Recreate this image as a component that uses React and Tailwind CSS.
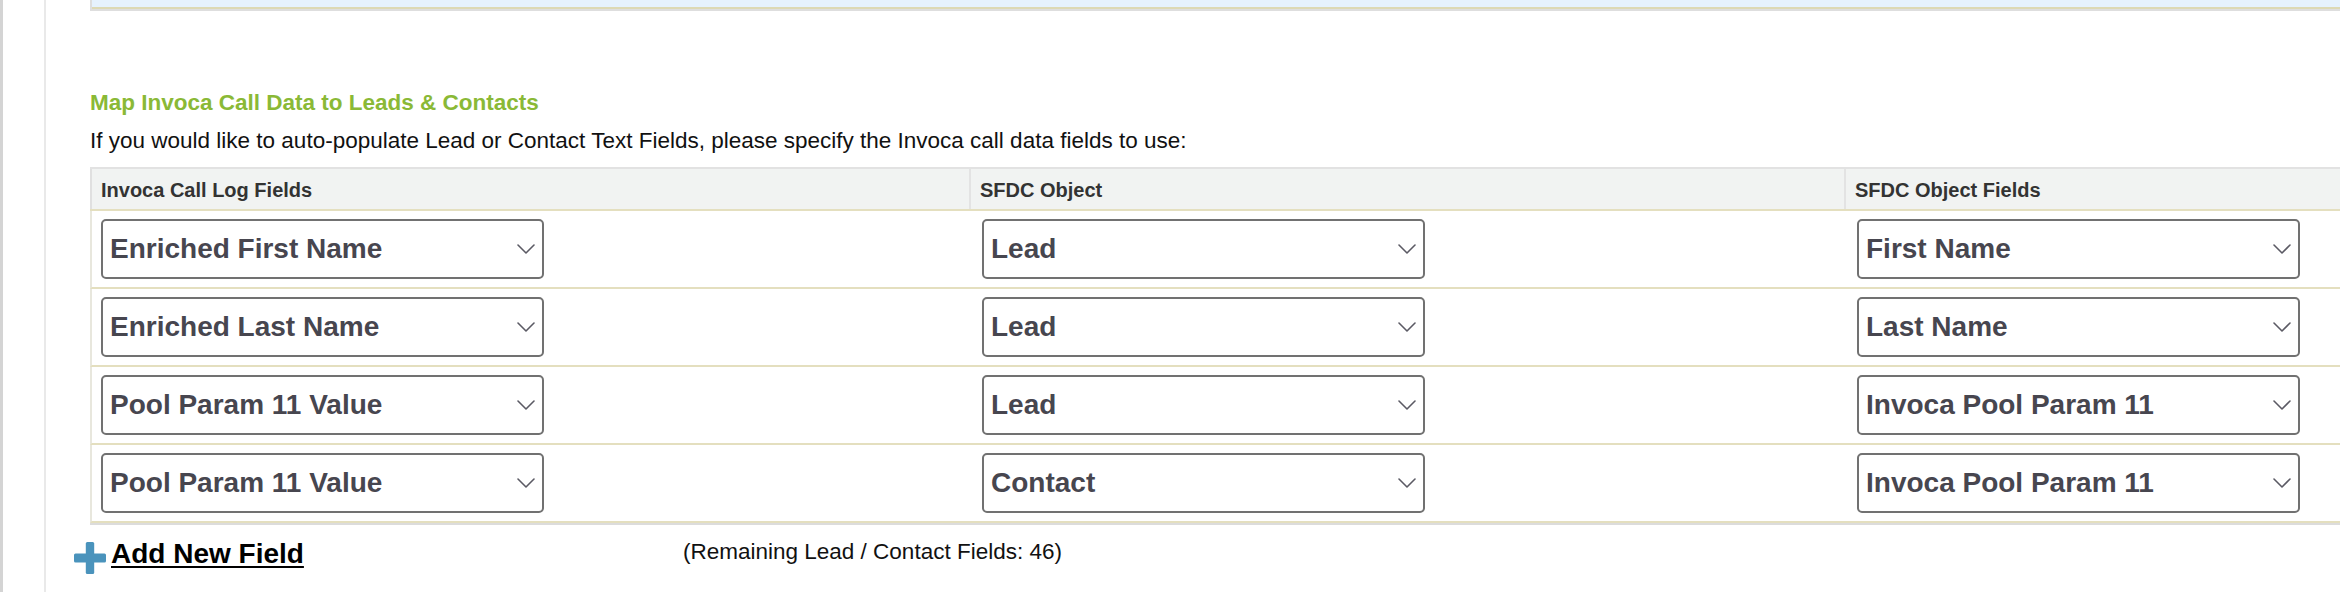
const rows = [
  ['Enriched First Name', 'Lead', 'First Name'],
  ['Enriched Last Name', 'Lead', 'Last Name'],
  ['Pool Param 11 Value', 'Lead', 'Invoca Pool Param 11'],
  ['Pool Param 11 Value', 'Contact', 'Invoca Pool Param 11'],
];

const headers = ['Invoca Call Log Fields', 'SFDC Object', 'SFDC Object Fields'];

export default function App() {
  return (
    <div className="flex min-h-screen bg-white font-['Liberation_Sans',Arial,Helvetica,sans-serif]">
      {/* side rails */}
      <div className="w-[3px] shrink-0 bg-[#d4d4d4]" />
      <div className="w-[41px] shrink-0" />
      <div className="w-[2px] shrink-0 bg-[#e9e9e9]" />

      <main className="min-w-0 flex-1 overflow-hidden pl-[28px]">
        {/* previous panel bottom edge */}
        <div className="ml-[16px] border-b-2 border-l-2 border-[#dedede]">
          <div className="h-[9px] border-b-2 border-[#ddd9b4] bg-[#e6f2fd]" />
        </div>

        <div className="pl-[16px]">
          <h2 className="mt-[79px] text-[22.5px] font-bold leading-[26px] text-[#8ab936]">
            Map Invoca Call Data to Leads &amp; Contacts
          </h2>
          <p className="mt-[12px] text-[22.5px] leading-[26px] text-[#111]">
            If you would like to auto-populate Lead or Contact Text Fields, please specify the
            Invoca call data fields to use:
          </p>

          <div className="mt-[13px] w-[2631px] border-b-2 border-[#dcdcdc]">
            {/* header */}
            <div className="grid grid-cols-[879px_875px_877px] border-t-2 border-b-2 border-t-[#e2e2e2] border-b-[#e4dfbf] bg-[#f1f3f2]">
              {headers.map((h, i) => (
                <div
                  key={h}
                  className={
                    'flex h-[40px] items-center border-l-2 pl-[9px] pt-[3px] text-[20px] font-bold leading-[23px] text-[#333] ' +
                    (i === 0 ? 'border-[#e0e0e0]' : 'border-[#e3e3e3]')
                  }
                >
                  {h}
                </div>
              ))}
            </div>

            {/* rows */}
            {rows.map((r, idx) => (
              <div
                key={idx}
                className="grid grid-cols-[879px_875px_877px] border-b-2 border-l-2 border-b-[#e4dfbf] border-l-[#e8e7dd]"
              >
                {r.map((v, i) => (
                  <div key={i} className={'py-[8px] ' + (i === 0 ? 'pl-[9px]' : 'pl-[11px]')}>
                    <Select value={v} />
                  </div>
                ))}
              </div>
            ))}
          </div>
        </div>

        {/* footer */}
        <div className="mt-[13px] flex items-start">
          <div className="flex w-[609px] items-start">
            <PlusIcon />
            <a
              href="#"
              className="ml-[5px] text-[28px] font-bold leading-[32px] text-black underline decoration-2 underline-offset-[3px]"
            >
              Add New Field
            </a>
          </div>
          <span className="mt-[1px] text-[22.5px] leading-[26px] text-[#111]">
            (Remaining Lead / Contact Fields: 46)
          </span>
        </div>
      </main>
    </div>
  );
}

function Select({ value }) {
  return (
    <div className="flex h-[60px] w-[443px] items-center justify-between rounded-[5px] border-2 border-[#717171] bg-white pl-[7px] pr-[7px]">
      <span className="text-[28px] font-bold leading-[32px] text-[#47464f]">{value}</span>
      <svg width="18" height="10" viewBox="0 0 18 10" className="shrink-0">
        <polyline
          points="1,1 9,9 17,1"
          fill="none"
          stroke="#5b5a64"
          strokeWidth="1.6"
          strokeLinecap="round"
          strokeLinejoin="round"
        />
      </svg>
    </div>
  );
}

function PlusIcon() {
  return (
    <svg className="mt-[4px] shrink-0" width="32" height="32" viewBox="0 0 32 32">
      <rect x="11.8" y="0" width="8.4" height="32" rx="1.5" fill="#4a93bc" />
      <rect x="0" y="11.5" width="32" height="9" rx="1.5" fill="#4a93bc" />
    </svg>
  );
}
